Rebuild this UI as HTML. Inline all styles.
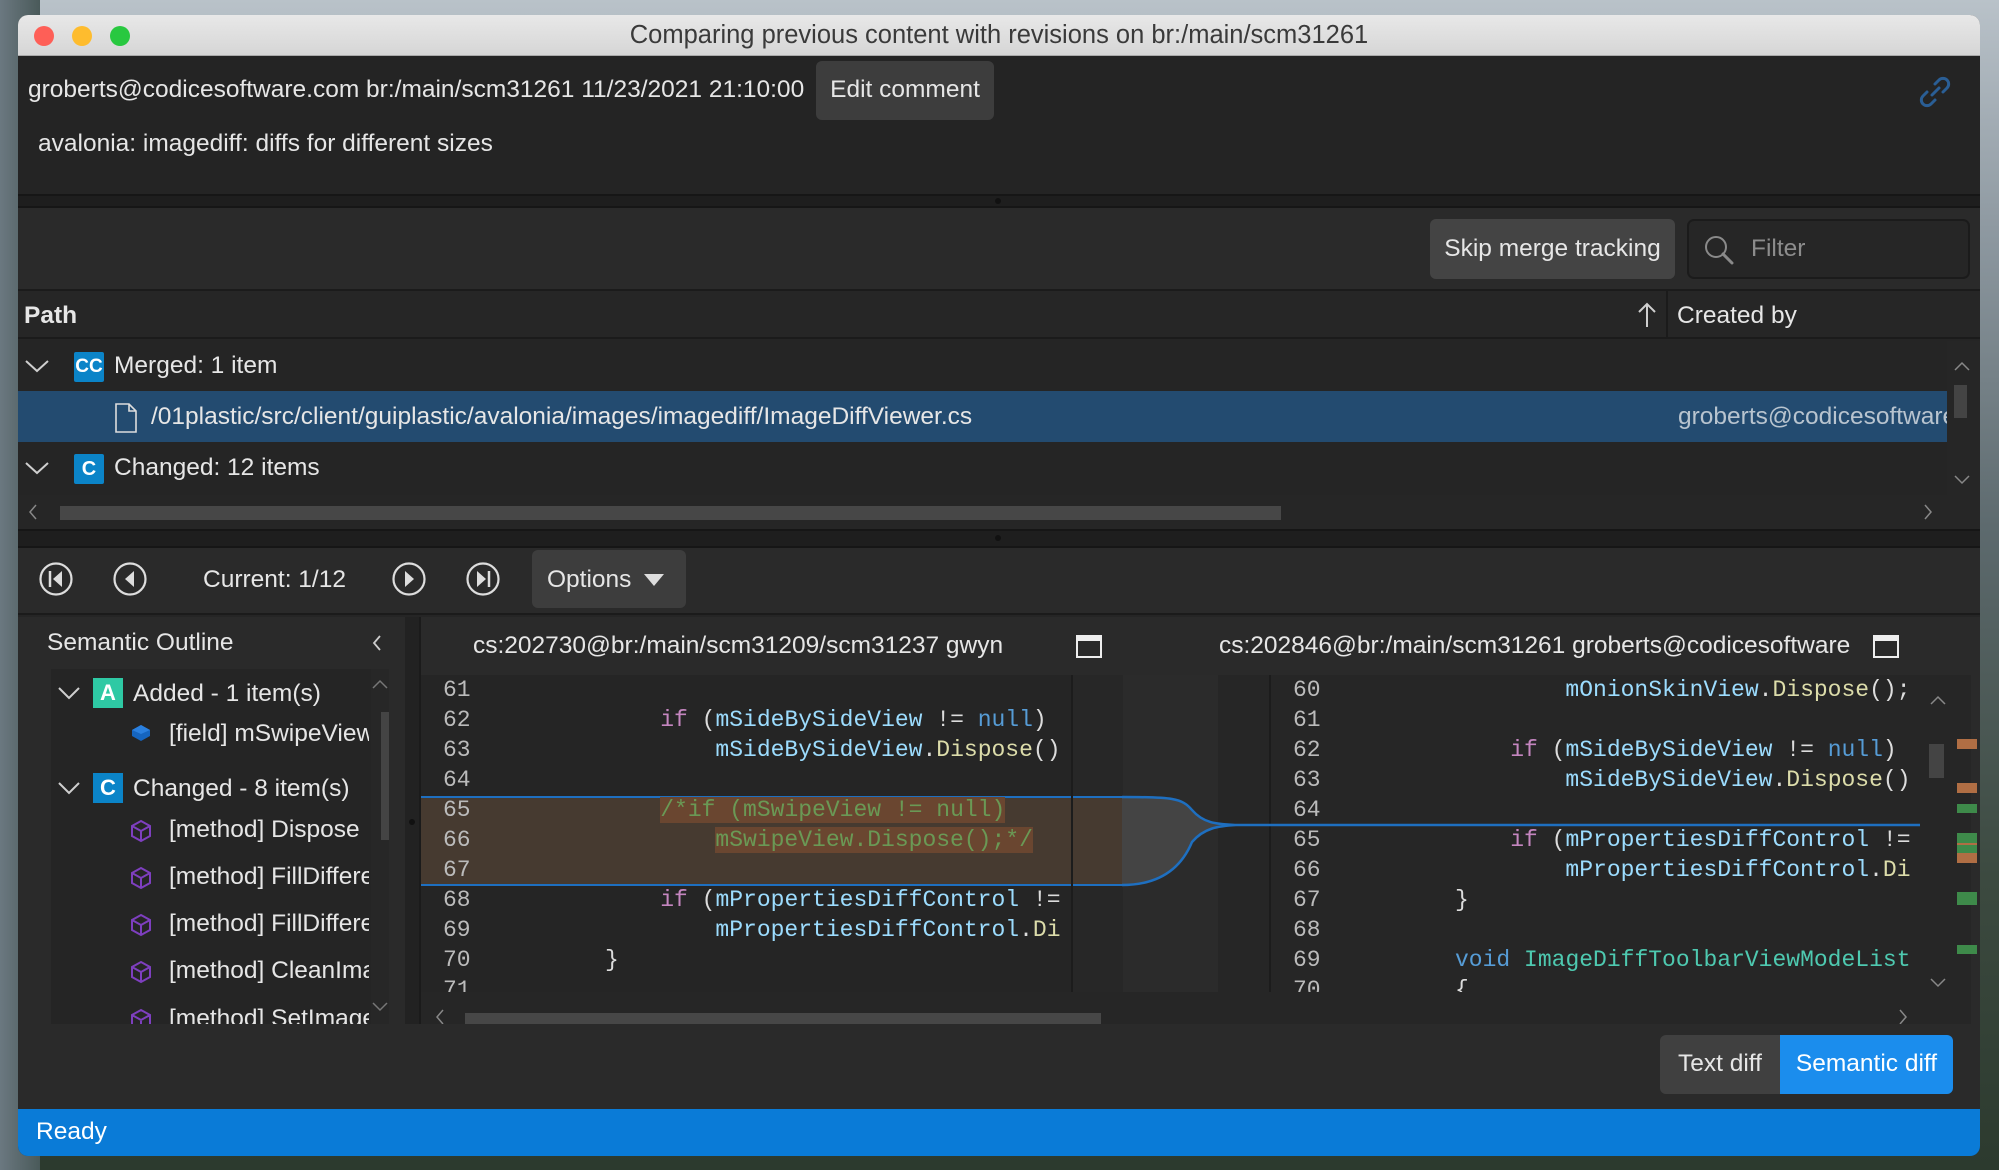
<!DOCTYPE html>
<html><head><meta charset="utf-8"><style>
*{margin:0;padding:0;box-sizing:border-box}
body{width:1999px;height:1170px;overflow:hidden;position:relative;font-family:"Liberation Sans",sans-serif;color:#e6e6e6;
background:linear-gradient(180deg,#b9c2c9 0%,#8d98a0 20%,#5d6a6e 45%,#3c4a40 75%,#2c3a2e 100%)}
.a{position:absolute}
.t{position:absolute;font-size:24.5px;white-space:nowrap;line-height:1}
.mono{font-family:"Liberation Mono",monospace;font-size:23px;white-space:pre;position:absolute;line-height:30px}
.btn{position:absolute;background:#3d3d3d;border-radius:6px}
</style></head><body>
<div class="a" style="left:0;top:0;width:40px;height:1170px;background:linear-gradient(90deg,#6b7880,#4a5a5a)"></div>
<div class="a" style="left:18px;top:15px;width:1962px;height:1141px;background:#252525;border-radius:10px;overflow:hidden">
 <div class="a" style="left:0;top:0;width:1962px;height:41px;background:linear-gradient(#e8e8e8,#d6d6d6);border-bottom:1px solid #aaa"></div>
 <div class="a" style="left:16px;top:11px;width:20px;height:20px;border-radius:50%;background:#fe5f57"></div>
 <div class="a" style="left:54px;top:11px;width:20px;height:20px;border-radius:50%;background:#febc2e"></div>
 <div class="a" style="left:92px;top:11px;width:20px;height:20px;border-radius:50%;background:#28c840"></div>
 <div class="t" style="left:0;width:1962px;text-align:center;top:8px;color:#3a3a3a;font-size:25.5px">Comparing previous content with revisions on br:/main/scm31261</div>
 <div class="a" style="left:0;top:41px;width:1962px;height:138px;background:#242424"></div>
 <div class="t" style="left:10px;top:63px">groberts@codicesoftware.com br:/main/scm31261 11/23/2021 21:10:00</div>
 <div class="btn" style="left:798px;top:46px;width:178px;height:59px"></div>
 <div class="t" style="left:798px;width:178px;text-align:center;top:63px">Edit comment</div>
 <svg class="a" style="left:1900px;top:60px" width="34" height="34" viewBox="0 0 34 34"><g fill="none" stroke="#2a5e95" stroke-width="3" stroke-linecap="round"><path d="M14 20 L21 13"/><path d="M17 9 l4-4 a5 5 0 0 1 8 8 l-4 4"/><path d="M17 25 l-4 4 a5 5 0 0 1 -8 -8 l4-4"/></g></svg>
 <div class="t" style="left:20px;top:117px">avalonia: imagediff: diffs for different sizes</div>
 <div class="a" style="left:0;top:179px;width:1962px;height:14px;background:#1e1e1e;border-top:2px solid #161616;border-bottom:2px solid #161616"></div>
 <div class="a" style="left:977px;top:183px;width:6px;height:6px;border-radius:50%;background:#111"></div>
 <div class="a" style="left:0;top:193px;width:1962px;height:83px;background:#2a2a2a;border-bottom:2px solid #1b1b1b"></div>
 <div class="btn" style="left:1412px;top:204px;width:245px;height:60px;background:#444"></div>
 <div class="t" style="left:1412px;width:245px;text-align:center;top:222px">Skip merge tracking</div>
 <div class="a" style="left:1669px;top:204px;width:283px;height:60px;border:2px solid #1b1b1b;border-radius:7px;background:#262626"></div>
 <svg class="a" style="left:1684px;top:218px" width="36" height="36" viewBox="0 0 36 36"><circle cx="14" cy="14" r="10" fill="none" stroke="#8a8a8a" stroke-width="2"/><path d="M21 21 L30 30" stroke="#8a8a8a" stroke-width="3" stroke-linecap="round"/></svg>
 <div class="t" style="left:1733px;top:222px;color:#8c8c8c">Filter</div>
 <div class="a" style="left:0;top:276px;width:1962px;height:48px;background:#262626;border-bottom:2px solid #1b1b1b"></div>
 <div class="t" style="left:6px;top:289px;font-weight:bold">Path</div>
 <svg class="a" style="left:1618px;top:286px" width="22" height="28"><path d="M11 26 V3 M3 11 L11 3 L19 11" fill="none" stroke="#cfcfcf" stroke-width="2"/></svg>
 <div class="a" style="left:1648px;top:276px;width:2px;height:48px;background:#1b1b1b"></div>
 <div class="t" style="left:1659px;top:289px">Created by</div>
 <div class="a" style="left:0;top:326px;width:1929px;height:154px;background:#252525"></div>
 <svg class="a" style="left:6px;top:343px" width="26" height="16"><path d="M2 3 L13 13 L24 3" fill="none" stroke="#cfcfcf" stroke-width="2"/></svg>
 <div class="a" style="left:56px;top:337px;width:30px;height:30px;background:#0b84c8;border-radius:2px;font-weight:bold;font-size:19px;text-align:center;line-height:30px;color:#fff">CC</div>
 <div class="t" style="left:96px;top:339px">Merged: 1 item</div>
 <div class="a" style="left:0;top:376px;width:1929px;height:51px;background:#234b70"></div>
 <svg class="a" style="left:96px;top:388px" width="24" height="30"><path d="M2 1 H15 L22 8 V29 H2 Z M15 1 V8 H22" fill="none" stroke="#ddd" stroke-width="1.6"/></svg>
 <div class="t" style="left:133px;top:390px">/01plastic/src/client/guiplastic/avalonia/images/imagediff/ImageDiffViewer.cs</div>
 <div class="t" style="left:1660px;top:390px;color:#b8c4cf;width:269px;overflow:hidden">groberts@codicesoftware</div>
 <svg class="a" style="left:6px;top:445px" width="26" height="16"><path d="M2 3 L13 13 L24 3" fill="none" stroke="#cfcfcf" stroke-width="2"/></svg>
 <div class="a" style="left:56px;top:439px;width:30px;height:30px;background:#0b84c8;border-radius:2px;font-weight:bold;font-size:20px;text-align:center;line-height:30px;color:#fff">C</div>
 <div class="t" style="left:96px;top:441px">Changed: 12 items</div>
 <div class="a" style="left:1929px;top:326px;width:33px;height:154px;background:#262626"></div>
 <svg class="a" style="left:1936px;top:346px" width="16" height="10"><path d="M1 9 L8 2 L15 9" fill="none" stroke="#888" stroke-width="1.5"/></svg>
 <div class="a" style="left:1936px;top:370px;width:13px;height:33px;background:#444"></div>
 <svg class="a" style="left:1936px;top:460px" width="16" height="10"><path d="M1 1 L8 8 L15 1" fill="none" stroke="#888" stroke-width="1.5"/></svg>
 <div class="a" style="left:0;top:480px;width:1962px;height:34px;background:#262626"></div>
 <svg class="a" style="left:10px;top:489px" width="10" height="16"><path d="M8 1 L2 8 L8 15" fill="none" stroke="#888" stroke-width="1.5"/></svg>
 <div class="a" style="left:42px;top:491px;width:1221px;height:14px;background:#474747"></div>
 <svg class="a" style="left:1905px;top:489px" width="10" height="16"><path d="M2 1 L8 8 L2 15" fill="none" stroke="#888" stroke-width="1.5"/></svg>
 <div class="a" style="left:0;top:514px;width:1962px;height:19px;background:#1e1e1e;border-top:2px solid #161616;border-bottom:2px solid #161616"></div>
 <div class="a" style="left:977px;top:520px;width:6px;height:6px;border-radius:50%;background:#111"></div>
 <div class="a" style="left:0;top:533px;width:1962px;height:67px;background:#2a2a2a;border-bottom:2px solid #1b1b1b"></div>
 <svg class="a" style="left:20px;top:546px" width="36" height="36" viewBox="0 0 36 36"><circle cx="18" cy="18" r="15.5" fill="none" stroke="#ddd" stroke-width="2.2"/><path d="M12 10 V26" stroke="#ddd" stroke-width="2.5"/><path d="M24 10 L15 18 L24 26Z" fill="#ddd"/></svg>
 <svg class="a" style="left:94px;top:546px" width="36" height="36" viewBox="0 0 36 36"><circle cx="18" cy="18" r="15.5" fill="none" stroke="#ddd" stroke-width="2.2"/><path d="M22 10 L13 18 L22 26Z" fill="#ddd"/></svg>
 <div class="t" style="left:185px;top:553px">Current: 1/12</div>
 <svg class="a" style="left:373px;top:546px" width="36" height="36" viewBox="0 0 36 36"><circle cx="18" cy="18" r="15.5" fill="none" stroke="#ddd" stroke-width="2.2"/><path d="M14 10 L23 18 L14 26Z" fill="#ddd"/></svg>
 <svg class="a" style="left:447px;top:546px" width="36" height="36" viewBox="0 0 36 36"><circle cx="18" cy="18" r="15.5" fill="none" stroke="#ddd" stroke-width="2.2"/><path d="M12 10 L21 18 L12 26Z" fill="#ddd"/><path d="M24 10 V26" stroke="#ddd" stroke-width="2.5"/></svg>
 <div class="btn" style="left:514px;top:535px;width:154px;height:58px;background:#3d3d3d"></div>
 <div class="t" style="left:529px;top:553px">Options</div>
 <svg class="a" style="left:626px;top:559px" width="20" height="12"><path d="M0 0 H20 L10 12Z" fill="#ddd"/></svg>
 <!-- left panel -->
 <div class="a" style="left:0;top:602px;width:387px;height:407px;background:#2a2a2a"></div>
 <div class="t" style="left:29px;top:616px">Semantic Outline</div>
 <svg class="a" style="left:354px;top:620px" width="10" height="16"><path d="M8 1 L2 8 L8 15" fill="none" stroke="#ccc" stroke-width="1.8"/></svg>
 <div class="a" style="left:33px;top:654px;width:338px;height:355px;background:#252525;overflow:hidden">
  <div class="a" style="left:320px;top:0;width:18px;height:355px;background:#272727"></div>
  <svg class="a" style="left:321px;top:10px" width="16" height="10"><path d="M1 9 L8 2 L15 9" fill="none" stroke="#777" stroke-width="1.5"/></svg>
  <div class="a" style="left:330px;top:43px;width:10px;height:128px;background:#444"></div>
  <svg class="a" style="left:321px;top:333px" width="16" height="10"><path d="M1 1 L8 8 L15 1" fill="none" stroke="#777" stroke-width="1.5"/></svg>
  <svg class="a" style="left:6px;top:17px" width="24" height="14"><path d="M2 2 L12 12 L22 2" fill="none" stroke="#cfcfcf" stroke-width="2"/></svg>
  <div class="a" style="left:42px;top:9px;width:30px;height:30px;background:#2ec9a4;font-weight:bold;font-size:22px;text-align:center;line-height:30px;color:#fff">A</div>
  <div class="t" style="left:82px;top:13px">Added - 1 item(s)</div>
  <svg class="a" style="left:79px;top:53px" width="22" height="22" viewBox="0 0 22 22"><path d="M2 8 L11 3 L20 8 V14 L11 19 L2 14Z" fill="#1565c0"/><path d="M2 8 L11 3 L20 8 L11 12Z" fill="#2a80e0"/></svg>
  <div class="t" style="left:118px;top:53px;width:200px;overflow:hidden">[field] mSwipeView</div>
  <svg class="a" style="left:6px;top:112px" width="24" height="14"><path d="M2 2 L12 12 L22 2" fill="none" stroke="#cfcfcf" stroke-width="2"/></svg>
  <div class="a" style="left:42px;top:104px;width:30px;height:30px;background:#0b84c8;font-weight:bold;font-size:22px;text-align:center;line-height:30px;color:#fff">C</div>
  <div class="t" style="left:82px;top:108px">Changed - 8 item(s)</div>
  <svg class="a" style="left:79px;top:150px" width="22" height="24" viewBox="0 0 22 24"><path d="M11 2 L20 7 V17 L11 22 L2 17 V7Z M2 7 L11 12 L20 7 M11 12 V22" fill="none" stroke="#7e3fbf" stroke-width="2"/></svg>
  <div class="t" style="left:118px;top:149px;width:200px;overflow:hidden">[method] Dispose</div>
  <svg class="a" style="left:79px;top:197px" width="22" height="24" viewBox="0 0 22 24"><path d="M11 2 L20 7 V17 L11 22 L2 17 V7Z M2 7 L11 12 L20 7 M11 12 V22" fill="none" stroke="#7e3fbf" stroke-width="2"/></svg>
  <div class="t" style="left:118px;top:196px;width:200px;overflow:hidden">[method] FillDifferences</div>
  <svg class="a" style="left:79px;top:244px" width="22" height="24" viewBox="0 0 22 24"><path d="M11 2 L20 7 V17 L11 22 L2 17 V7Z M2 7 L11 12 L20 7 M11 12 V22" fill="none" stroke="#7e3fbf" stroke-width="2"/></svg>
  <div class="t" style="left:118px;top:243px;width:200px;overflow:hidden">[method] FillDifferences</div>
  <svg class="a" style="left:79px;top:291px" width="22" height="24" viewBox="0 0 22 24"><path d="M11 2 L20 7 V17 L11 22 L2 17 V7Z M2 7 L11 12 L20 7 M11 12 V22" fill="none" stroke="#7e3fbf" stroke-width="2"/></svg>
  <div class="t" style="left:118px;top:290px;width:200px;overflow:hidden">[method] CleanImages</div>
  <svg class="a" style="left:79px;top:339px" width="22" height="24" viewBox="0 0 22 24"><path d="M11 2 L20 7 V17 L11 22 L2 17 V7Z M2 7 L11 12 L20 7 M11 12 V22" fill="none" stroke="#7e3fbf" stroke-width="2"/></svg>
  <div class="t" style="left:118px;top:338px;width:200px;overflow:hidden">[method] SetImages</div>
 </div>
 <div class="a" style="left:387px;top:602px;width:16px;height:407px;background:#222;border-right:2px solid #1b1b1b"></div>
 <div class="a" style="left:391px;top:804px;width:6px;height:6px;border-radius:50%;background:#111"></div>
 <!-- diff area -->
 <div class="a" style="left:403px;top:602px;width:1559px;height:58px;background:#2a2a2a"></div>
 <div class="t" style="left:455px;top:619px">cs:202730@br:/main/scm31209/scm31237 gwyn</div>
 <div class="a" style="left:1058px;top:620px;width:26px;height:23px;border:2px solid #eee;border-top-width:6px"></div>
 <div class="t" style="left:1201px;top:619px">cs:202846@br:/main/scm31261 groberts@codicesoftware</div>
 <div class="a" style="left:1855px;top:620px;width:26px;height:23px;border:2px solid #eee;border-top-width:6px"></div>
 <div class="a" style="left:403px;top:660px;width:1550px;height:317px;background:#262626"></div>
 <div class="a" style="left:403px;top:660px;width:650px;height:317px;background:#252525;overflow:hidden">
  <div class="a" style="left:0;top:121px;width:650px;height:90px;background:#463a30;border-top:2px solid #1e6fc0;border-bottom:2px solid #1e6fc0"></div>
 </div>
 <div class="a" style="left:1053px;top:660px;width:2px;height:317px;background:#1c1c1c"></div>
 <div class="a" style="left:1055px;top:660px;width:50px;height:317px;background:#272727"></div>
 <div class="a" style="left:1055px;top:781px;width:50px;height:90px;background:#463a30;border-top:2px solid #1e6fc0;border-bottom:2px solid #1e6fc0"></div>
 <div class="a" style="left:1105px;top:660px;width:95px;height:317px;background:#2b2b2b"></div>
 <div class="a" style="left:1200px;top:660px;width:53px;height:317px;background:#262626;border-right:2px solid #1c1c1c"></div>
 <svg class="a" style="left:1104px;top:765px" width="850" height="110"><path d="M0 17 C50 17 60 18 70 30 C82 44 96 44 114 45 C96 46 82 48 70 62 C60 86 40 105 0 105 Z" fill="#444"/><path d="M0 17 C50 17 60 18 70 30 C82 44 96 44 114 45 C96 46 82 48 70 62 C60 86 40 105 0 105" fill="none" stroke="#1e6fc0" stroke-width="2.5"/><path d="M114 45 H798" stroke="#1e6fc0" stroke-width="2.5"/></svg>
 <div class="a" style="left:403px;top:660px;width:650px;height:317px;overflow:hidden">
  <div class="mono" style="left:22px;top:0;color:#bbb">61
62
63
64
65
66
67
68
69
70
71</div>
  <div class="mono" style="left:184px;top:0;color:#dcdcdc"> 
    <span style="color:#c586c0">if</span> (<span style="color:#9cdcfe">mSideBySideView</span> != <span style="color:#569cd6">null</span>)
        <span style="color:#9cdcfe">mSideBySideView</span>.<span style="color:#dcdcaa">Dispose</span>()
 
    <span style="color:#6a9955;background:#6a4630">/*if (mSwipeView != null)</span>
        <span style="color:#6a9955;background:#6a4630">mSwipeView.Dispose();*/</span>
 
    <span style="color:#c586c0">if</span> (<span style="color:#9cdcfe">mPropertiesDiffControl</span> !=
        <span style="color:#9cdcfe">mPropertiesDiffControl</span>.<span style="color:#dcdcaa">Di</span>
}</div>
 </div>
 <div class="a" style="left:1253px;top:660px;width:648px;height:317px;overflow:hidden">
  <div class="mono" style="left:22px;top:0;color:#bbb">60
61
62
63
64
65
66
67
68
69
70</div>
  <div class="mono" style="left:184px;top:0;color:#dcdcdc">        <span style="color:#9cdcfe">mOnionSkinView</span>.<span style="color:#dcdcaa">Dispose</span>();
 
    <span style="color:#c586c0">if</span> (<span style="color:#9cdcfe">mSideBySideView</span> != <span style="color:#569cd6">null</span>)
        <span style="color:#9cdcfe">mSideBySideView</span>.<span style="color:#dcdcaa">Dispose</span>()
 
    <span style="color:#c586c0">if</span> (<span style="color:#9cdcfe">mPropertiesDiffControl</span> !=
        <span style="color:#9cdcfe">mPropertiesDiffControl</span>.<span style="color:#dcdcaa">Di</span>
}
 
<span style="color:#569cd6">void</span> <span style="color:#4ec9b0">ImageDiffToolbarViewModeList</span>
{</div>
 </div>
 <svg class="a" style="left:1912px;top:680px" width="16" height="10"><path d="M1 9 L8 2 L15 9" fill="none" stroke="#888" stroke-width="1.5"/></svg>
 <div class="a" style="left:1911px;top:729px;width:15px;height:34px;background:#444"></div>
 <svg class="a" style="left:1912px;top:963px" width="16" height="10"><path d="M1 1 L8 8 L15 1" fill="none" stroke="#888" stroke-width="1.5"/></svg>
 <div class="a" style="left:403px;top:977px;width:1550px;height:32px;background:#262626"></div>
 <svg class="a" style="left:417px;top:994px" width="10" height="16"><path d="M8 1 L2 8 L8 15" fill="none" stroke="#888" stroke-width="1.5"/></svg>
 <div class="a" style="left:447px;top:998px;width:636px;height:13px;background:#474747"></div>
 <svg class="a" style="left:1880px;top:994px" width="10" height="16"><path d="M2 1 L8 8 L2 15" fill="none" stroke="#888" stroke-width="1.5"/></svg>
 <div class="a" style="left:1953px;top:602px;width:9px;height:407px;background:#2a2a2a"></div>
 <div class="a" style="left:0;top:1009px;width:1962px;height:85px;background:#2a2a2a"></div>
 <div class="a" style="left:1642px;top:1020px;width:120px;height:59px;background:#404040;border-radius:6px 0 0 6px"></div>
 <div class="t" style="left:1642px;width:120px;text-align:center;top:1037px">Text diff</div>
 <div class="a" style="left:1762px;top:1020px;width:173px;height:59px;background:#1b8ded;border-radius:0 6px 6px 0"></div>
 <div class="t" style="left:1762px;width:173px;text-align:center;top:1037px;color:#fff">Semantic diff</div>
 <div class="a" style="left:0;top:1094px;width:1962px;height:47px;background:#0a7bd7"></div>
 <div class="t" style="left:18px;top:1105px;color:#fff">Ready</div>
</div>
<div class="a" style="left:1957px;top:739px;width:20px;height:10px;background:#b06e44"></div>
<div class="a" style="left:1957px;top:783px;width:20px;height:10px;background:#b06e44"></div>
<div class="a" style="left:1957px;top:804px;width:20px;height:9px;background:#3e8a4a"></div>
<div class="a" style="left:1957px;top:833px;width:20px;height:20px;background:#3e8a4a"></div>
<div class="a" style="left:1957px;top:843px;width:20px;height:2px;background:#b06e44"></div>
<div class="a" style="left:1957px;top:853px;width:20px;height:10px;background:#b06e44"></div>
<div class="a" style="left:1957px;top:892px;width:20px;height:13px;background:#3e8a4a"></div>
<div class="a" style="left:1957px;top:945px;width:20px;height:9px;background:#3e8a4a"></div>
</body></html>
